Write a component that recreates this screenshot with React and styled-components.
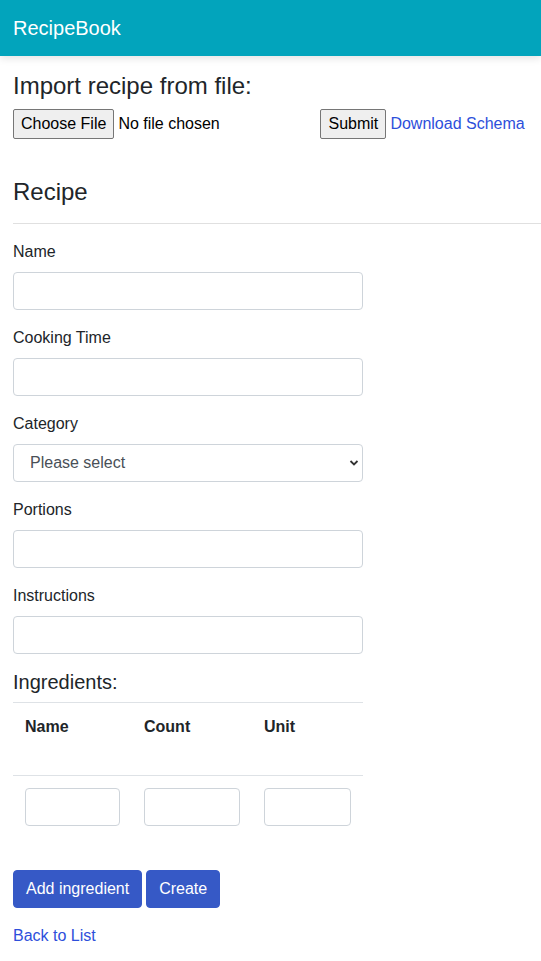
import React from 'react';
import styled, { createGlobalStyle } from 'styled-components';

const GlobalStyle = createGlobalStyle`
  html, body { margin: 0; padding: 0; background: #fff; }
  body {
    font-family: "Liberation Sans", Arial, sans-serif;
    font-size: 16px; line-height: 1.5; color: #212529;
    overflow-x: hidden;
  }
  * { box-sizing: border-box; }
`;

const Navbar = styled.header`
  height: 56px; background: #02a4bc;
  display: flex; align-items: center; padding: 0 13px;
  box-shadow: 0 2px 8px rgba(0,0,0,0.12);
  position: relative; z-index: 1;
`;

const Brand = styled.span`color: #fff; font-size: 20px; line-height: 30px;`;

const Main = styled.main`padding: 16px 0 16px 13px;`;

const Heading = styled.h4`
  margin: 0 0 8px; font-size: ${p => p.$size || 24}px; font-weight: 400; line-height: 1.2;
`;

const FileRow = styled.form`
  display: flex; align-items: center; height: 30px; margin-bottom: 39px;
`;

const FileButton = styled.span`
  display: inline-flex; align-items: center; height: 30px; padding: 0 7px;
  background: #efefef; border: 1px solid #767676; border-radius: 2px;
  color: #000; font-size: 16px;
`;

const FileHint = styled.span`margin-left: 4px; width: 202px; color: #000;`;

const SubmitButton = styled.button`
  height: 30px; padding: 0 6px; width: 66px;
  background: #efefef; border: 1px solid #767676; border-radius: 2px;
  font: 16px "Liberation Sans", Arial, sans-serif; color: #000;
`;

const Link = styled.a`
  color: #2d4fdb; text-decoration: none; margin-left: ${p => p.$gap || 0}px;
`;

const Rule = styled.hr`
  margin: 16px 0; border: 0; border-top: 1px solid #e0e0e0;
`;

const Field = styled.div`width: 350px; margin-bottom: 16px;`;

const Label = styled.label`display: block; margin-bottom: 8px;`;

const Input = styled.input`
  display: block; width: ${p => p.$w || '100%'}; height: 38px;
  padding: 6px 12px; border: 1px solid #ced4da; border-radius: 4px;
  font: 16px "Liberation Sans", Arial, sans-serif; color: #495057; background: #fff;
`;

const SelectWrap = styled.div`position: relative;`;

const Select = styled.select`
  display: block; width: 100%; height: 38px; padding: 6px 28px 6px 16px;
  border: 1px solid #ced4da; border-radius: 4px; appearance: none; background: #fff;
  font: 16px "Liberation Sans", Arial, sans-serif; color: #495057;
`;

const Chevron = styled.svg`
  position: absolute; right: 4px; top: 15px; width: 10px; height: 8px; pointer-events: none;
`;

const Table = styled.table`
  width: 350px; border-collapse: collapse; border-top: 1px solid #dee2e6;
  margin-top: 8px;
`;

const Th = styled.th`
  text-align: left; font-weight: 700; padding: 12px 12px 36px;
  border-bottom: 1px solid #dee2e6; width: ${p => p.$w}px;
`;

const Td = styled.td`padding: 12px;`;

const Actions = styled.div`display: flex; gap: 4px; margin-top: 32px; margin-bottom: 16px;`;

const Button = styled.button`
  height: 38px; padding: 6px 12px; border: 1px solid #3659c6; border-radius: 4px;
  background: #3659c6; color: #fff; font: 16px "Liberation Sans", Arial, sans-serif;
`;

export default function App() {
  return (
    <>
      <GlobalStyle />
      <Navbar><Brand>RecipeBook</Brand></Navbar>
      <Main>
        <Heading>Import recipe from file:</Heading>
        <FileRow onSubmit={e => e.preventDefault()}>
          <FileButton>Choose File</FileButton>
          <FileHint>No file chosen</FileHint>
          <SubmitButton type="submit">Submit</SubmitButton>
          <Link href="#" $gap={4}>Download Schema</Link>
        </FileRow>

        <Heading>Recipe</Heading>
        <Rule />

        <Field>
          <Label>Name</Label>
          <Input />
        </Field>
        <Field>
          <Label>Cooking Time</Label>
          <Input />
        </Field>
        <Field>
          <Label>Category</Label>
          <SelectWrap>
            <Select defaultValue="">
              <option value="">Please select</option>
            </Select>
            <Chevron viewBox="0 0 10 8">
              <path d="M1.5 2 L5 5.5 L8.5 2" fill="none" stroke="#333" strokeWidth="1.8" />
            </Chevron>
          </SelectWrap>
        </Field>
        <Field>
          <Label>Portions</Label>
          <Input />
        </Field>
        <Field>
          <Label>Instructions</Label>
          <Input />
        </Field>

        <Heading $size={20}>Ingredients:</Heading>
        <Table>
          <thead>
            <tr>
              <Th $w={119}>Name</Th>
              <Th $w={120}>Count</Th>
              <Th $w={111}>Unit</Th>
            </tr>
          </thead>
          <tbody>
            <tr>
              <Td><Input $w="95px" /></Td>
              <Td><Input $w="96px" /></Td>
              <Td><Input $w="87px" /></Td>
            </tr>
          </tbody>
        </Table>

        <Actions>
          <Button>Add ingredient</Button>
          <Button>Create</Button>
        </Actions>
        <Link href="#">Back to List</Link>
      </Main>
    </>
  );
}
